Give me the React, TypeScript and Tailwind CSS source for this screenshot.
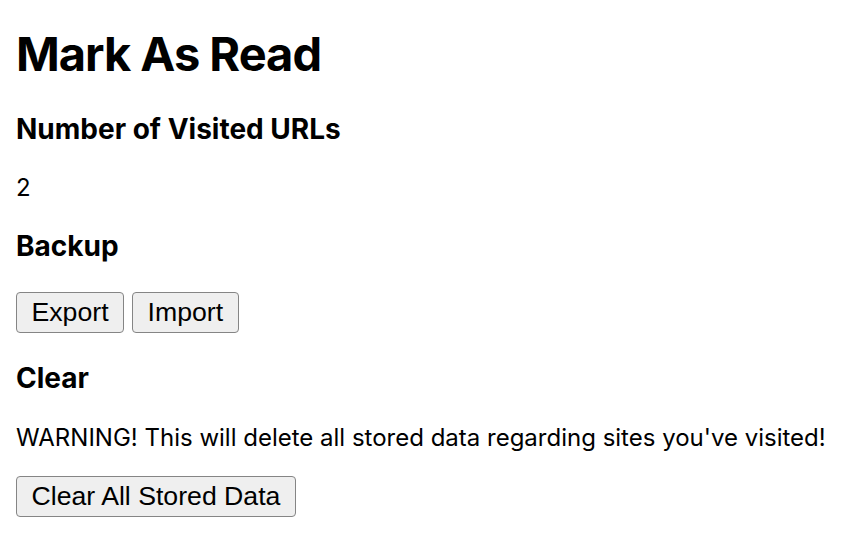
import React from 'react';

const Section: React.FC<{ title: string; children: React.ReactNode }> = ({ title, children }) => (
  <section>
    <h3 className="text-[28px] leading-[34px] font-bold mt-[27px]">{title}</h3>
    {children}
  </section>
);

const Button: React.FC<{ label: string; onClick?: () => void }> = ({ label, onClick }) => (
  <button
    onClick={onClick}
    className="h-[41px] px-[14.5px] flex items-center bg-[#efefef] border border-[#858585] rounded-[4px] text-[26.67px] leading-none text-black font-['Liberation_Sans',Arial,sans-serif]"
  >
    {label}
  </button>
);

const App: React.FC = () => {
  const visitedCount = 2;

  return (
    <div className="min-h-screen bg-white text-black px-4 pt-[25px] font-['Inter','Noto_Sans',sans-serif]">
      <h1 className="text-[47px] leading-[58px] font-bold tracking-[-1px]">Mark As Read</h1>

      <h3 className="text-[28px] leading-[34px] font-bold mt-[29px]">Number of Visited URLs</h3>
      <p className="text-[24px] leading-[29px] mt-[27px]">{visitedCount}</p>

      <Section title="Backup">
        <div className="flex gap-2 mt-[29px]">
          <Button label="Export" />
          <Button label="Import" />
        </div>
      </Section>

      <section>
        <h3 className="text-[28px] leading-[34px] font-bold mt-[28px]">Clear</h3>
        <p className="text-[24px] leading-[29px] mt-[28px]">
          WARNING! This will delete all stored data regarding sites you've visited!
        </p>
        <div className="flex mt-[24px]">
          <Button label="Clear All Stored Data" />
        </div>
      </section>
    </div>
  );
};

export default App;
